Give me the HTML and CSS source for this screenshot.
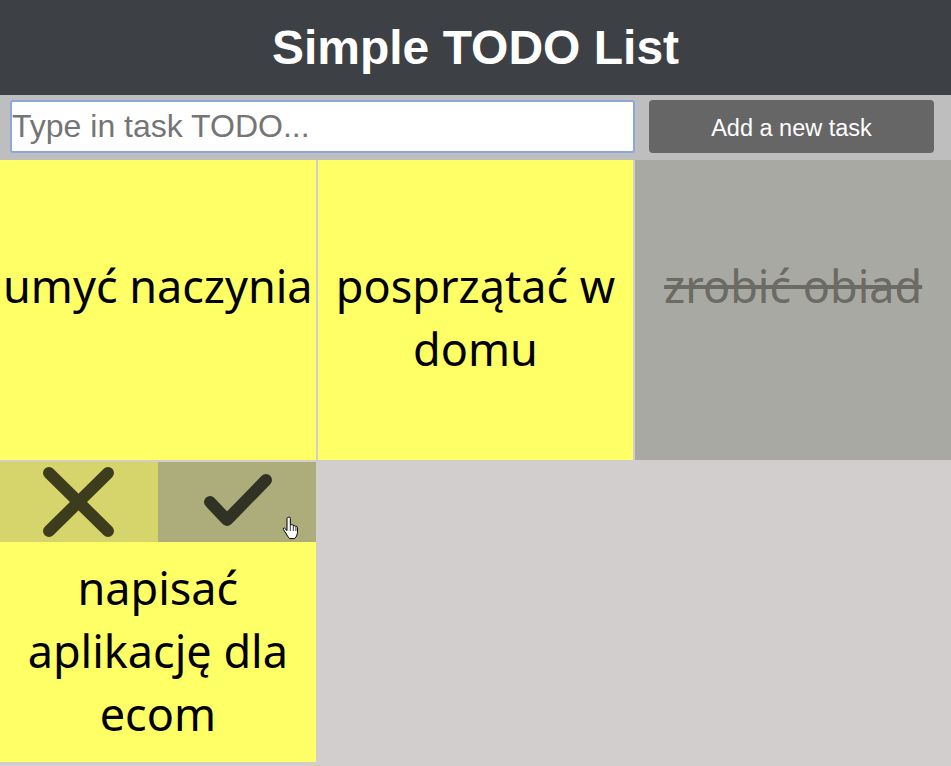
FILE: index.html
```html
<!DOCTYPE html>
<html lang="pl">
<head>
<meta charset="utf-8">
<title>Simple TODO List</title>
<link rel="stylesheet" href="styles.css">
</head>
<body>
  <header class="header">
    <h1 class="title">Simple TODO List</h1>
  </header>
  <div class="toolbar">
    <input class="task-input" type="text" placeholder="Type in task TODO...">
    <button class="add-btn" type="button">Add a new task</button>
  </div>
  <main class="board">
    <div class="card">
      <div class="actions"></div>
      <div class="card-text">umyć naczynia</div>
    </div>
    <div class="card">
      <div class="actions"></div>
      <div class="card-text">posprzątać w domu</div>
    </div>
    <div class="card card-done">
      <div class="actions"></div>
      <div class="card-text">zrobić obiad</div>
    </div>
    <div class="card card-hover">
      <div class="actions actions-visible">
        <div class="act act-remove">
          <svg class="act-icon" width="158" height="80" viewBox="0 0 158 80">
            <line x1="49" y1="11" x2="108" y2="69" stroke="#3d3d1d" stroke-width="12" stroke-linecap="round"/>
            <line x1="108" y1="11" x2="49" y2="69" stroke="#3d3d1d" stroke-width="12" stroke-linecap="round"/>
          </svg>
        </div>
        <div class="act act-done">
          <svg class="act-icon" width="158" height="80" viewBox="0 0 158 80">
            <polyline points="52,40 69,58 108,18" fill="none" stroke="#303223" stroke-width="12" stroke-linecap="round" stroke-linejoin="round"/>
          </svg>
          <svg class="cursor" width="18" height="24" viewBox="0 0 18 24">
            <path d="M6.5 1.2 Q8 0.6 8.3 2.2 V9.4 Q9 8.4 10.3 8.8 Q11.4 8.6 11.8 9.9 Q12.9 9.2 13.8 10.4 Q15.2 10 15.5 11.6 V16.5 Q15.3 20.5 12.6 22.6 H7.6 Q5.6 20.6 3.8 17 L1.4 13.6 Q0.8 12 2.4 12 L5 14.6 V2.4 Q5.2 1.4 6.5 1.2 Z" fill="#fff" stroke="#000" stroke-width="1"/>
            <line x1="8.3" y1="10" x2="8.3" y2="15" stroke="#000" stroke-width="0.8"/>
            <line x1="11.3" y1="10" x2="11.3" y2="15" stroke="#000" stroke-width="0.8"/>
            <line x1="13.9" y1="11" x2="13.9" y2="15" stroke="#000" stroke-width="0.8"/>
          </svg>
        </div>
      </div>
      <div class="card-text">napisać aplikację dla ecom</div>
    </div>
  </main>
</body>
</html>
```

FILE: styles.css
```css
* {
  box-sizing: border-box;
}

html, body {
  margin: 0;
  padding: 0;
}

body {
  background: #d3cece;
  font-family: "Liberation Sans", Arial, sans-serif;
}

.header {
  height: 95px;
  background: #3d4044;
  display: flex;
  align-items: center;
  justify-content: center;
}

.title {
  margin: 0;
  color: #ffffff;
  font-family: "Liberation Sans", Arial, sans-serif;
  font-weight: bold;
  font-size: 48px;
  line-height: normal;
}

.toolbar {
  height: 65px;
  background: #bebebe;
  display: flex;
  align-items: flex-start;
  gap: 14px;
  padding: 5px 17px 0 10px;
}

.task-input {
  width: 625px;
  height: 53px;
  margin: 0;
  border: 2px solid #8ba7e0;
  border-radius: 3px;
  padding: 0;
  background: #ffffff;
  font-family: "Liberation Sans", Arial, sans-serif;
  font-size: 32px;
  color: #222;
  outline: none;
}

.task-input::placeholder {
  color: #757575;
}

.add-btn {
  flex: 1;
  height: 53px;
  margin: 0;
  border: none;
  border-radius: 4px;
  background: #666666;
  color: #ffffff;
  font-family: "Liberation Sans", Arial, sans-serif;
  font-size: 23.5px;
  padding: 3px 0 0;
}

.board {
  display: grid;
  grid-template-columns: repeat(3, 1fr);
  grid-auto-rows: 300px;
  gap: 2px;
  background: #d3cece;
}

.card {
  background: #ffff66;
  display: flex;
  flex-direction: column;
  overflow: hidden;
}

.actions {
  height: 80px;
  flex: none;
  display: flex;
  visibility: hidden;
}

.actions-visible {
  visibility: visible;
}

.act {
  flex: 1;
  position: relative;
  display: flex;
  align-items: center;
  justify-content: center;
}

.act-remove {
  background: #d5d56b;
}

.act-done {
  background: #adad7b;
}

.act-icon {
  display: block;
}

.cursor {
  position: absolute;
  left: 124px;
  top: 54px;
}

.card-text {
  padding-top: 14px;
  text-align: center;
  font-family: "Noto Sans", "Open Sans", sans-serif;
  font-size: 45px;
  line-height: 63px;
  color: #000000;
}

.card-done {
  background: #a9a9a3;
}

.card-done .card-text {
  color: #6b6b63;
  text-decoration: line-through;
}
```
